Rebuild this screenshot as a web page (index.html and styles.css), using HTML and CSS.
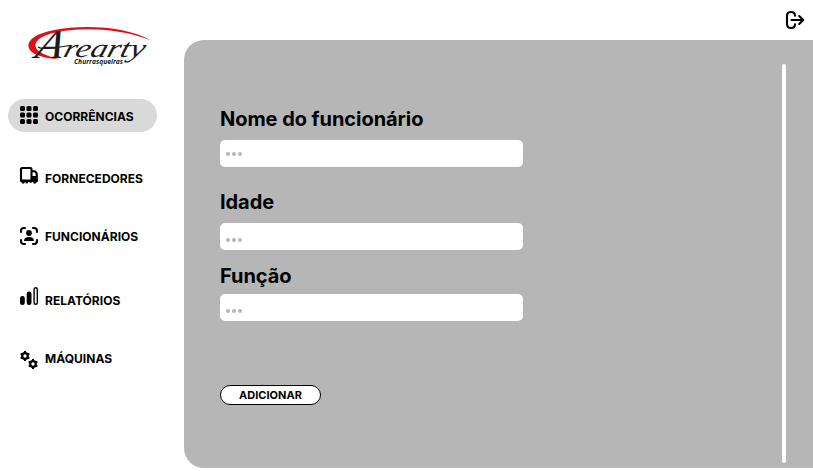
FILE: index.html
```html
<!DOCTYPE html>
<html lang="pt-BR">
<head>
<meta charset="utf-8">
<title>Arearty Churrasqueiras</title>
<link rel="stylesheet" href="styles.css">
</head>
<body>
<div class="app">
  <aside class="sidebar">
    <svg class="logo" viewBox="0 0 140 56" role="img" aria-label="Arearty Churrasqueiras">
      <path class="swoosh" d="M131 20.500C108 6.500 64 4 34 10C16 13.500 7 20 8.500 27C10 34 22 38 40 39.500C27 36 16 32 15.500 26C15 18 29 12.500 47 10.500C77 7 108 11 131 20.500Z"/>
      <path class="stroke" d="M18 27C22 30 34 28 50 25.500"/>
      <g transform="translate(0 37) skewX(-16)">
        <text class="brand-cap" x="14" y="1" textLength="27" lengthAdjust="spacingAndGlyphs">A</text>
        <text class="brand" x="42" y="-.5" textLength="81" lengthAdjust="spacingAndGlyphs">rearty</text>
      </g>
      <text class="tagline" x="54" y="44" textLength="49" lengthAdjust="spacingAndGlyphs">Churrasqueiras</text>
    </svg>
    <nav class="menu">
      <a class="item active">
        <svg class="icon" viewBox="0 0 18 18"><rect width="5" height="5" rx="1.500"/><rect x="6.500" width="5" height="5" rx="1.500"/><rect x="13" width="5" height="5" rx="1.500"/><rect y="6.500" width="5" height="5" rx="1.500"/><rect x="6.500" y="6.500" width="5" height="5" rx="1.500"/><rect x="13" y="6.500" width="5" height="5" rx="1.500"/><rect y="13" width="5" height="5" rx="1.500"/><rect x="6.500" y="13" width="5" height="5" rx="1.500"/><rect x="13" y="13" width="5" height="5" rx="1.500"/></svg>
        <span>OCORRÊNCIAS</span>
      </a>
      <a class="item suppliers">
        <svg class="icon" viewBox="0 0 18 18"><path class="line" d="M1 13.500V2Q1 1 2 1H10.500Q11.500 1 11.500 2V13.500M11.500 4.200H14.500Q16.800 5 16.800 8.500V13.500"/><path d="M0 12.500H18V14Q18 15 17 15H16.500A1.700 1.700 0 0 1 13.100 15H12A1.500 1.500 0 0 1 9.300 15H8.200A1.500 1.500 0 0 1 5.200 15H4.800A1.700 1.700 0 0 1 1.400 15Q0 15 0 13.500ZM11 9H17V14H11Z"/></svg>
        <span>FORNECEDORES</span>
      </a>
      <a class="item staff">
        <svg class="icon" viewBox="0 0 18 18"><path class="line" d="M1 5V4Q1 1 4 1H5M13 1H14Q17 1 17 4V5M17 13V14Q17 17 14 17H13M5 17H4Q1 17 1 14V13"/><circle cx="9" cy="6" r="2.900"/><path d="M4 14Q4 10 9 10T14 14Z"/></svg>
        <span>FUNCIONÁRIOS</span>
      </a>
      <a class="item reports">
        <svg class="icon" viewBox="0 0 18 18"><rect y="9" width="4.800" height="9" rx="2.300"/><rect x="6.700" y="4.500" width="4.800" height="13.500" rx="2.300"/><rect class="thin" x="14.100" y=".7" width="3.200" height="16.600" rx="1.500"/></svg>
        <span>RELATÓRIOS</span>
      </a>
      <a class="item machines">
        <svg class="icon" viewBox="0 0 18 18"><g id="gear"><circle class="ring" cx="5" cy="5" r="2.800"/><path class="teeth" d="M5 0V1.700M5 8.300V10M.7 2.500L2.200 3.400M7.800 6.600L9.300 7.500M.7 7.500L2.200 6.600M7.800 3.400L9.300 2.500"/></g><use href="#gear" x="8" y="8"/></svg>
        <span>MÁQUINAS</span>
      </a>
    </nav>
  </aside>
  <main class="main">
    <header class="topbar">
      <svg class="exit" viewBox="0 0 18 18"><path class="line" d="M9 4.800C9 2 7.500 1 5 1S1 2 1 5V13C1 16 2.500 17 5 17S9 16 9 13.200M5.500 9H17M13.200 5L17.200 9L13.200 13"/></svg>
    </header>
    <section class="panel">
      <form class="form">
        <label for="nome">Nome do funcionário</label>
        <div class="field raised" id="nome"><i></i><i></i><i></i></div>
        <label for="idade">Idade</label>
        <div class="field" id="idade"><i></i><i></i><i></i></div>
        <label for="funcao" class="close">Função</label>
        <div class="field" id="funcao"><i></i><i></i><i></i></div>
        <button type="button">ADICIONAR</button>
      </form>
      <div class="scrollbar"></div>
    </section>
  </main>
</div>
</body>
</html>
```
FILE: styles.css
```css
* { box-sizing: border-box; }
body { margin: 0; background: #fff; color: #000; font-family: Inter, "Liberation Sans", sans-serif; overflow: hidden; }
.app { display: flex; width: 813px; height: 471px; }
.sidebar { width: 184px; padding: 20px 0 0 8px; }
.logo { display: block; width: 140px; height: 56px; margin-left: 12px; }
.swoosh { fill: #e20d17; }
.stroke { fill: none; stroke: #1c1c1c; stroke-width: 1.2; }
.brand, .brand-cap { font-family: "Liberation Serif", serif; font-style: italic; fill: #1c1c1c; }
.brand { font-size: 26px; }
.brand-cap { font-size: 41px; }
.tagline { font: italic 700 7px "Open Sans", sans-serif; fill: #1c1c1c; }
.menu { display: flex; flex-direction: column; margin-top: 23px; }
.item { display: flex; align-items: center; gap: 7px; width: 149px; height: 33px; padding-left: 12px; border-radius: 17px; font-size: 12px; font-weight: 700; letter-spacing: .02px; line-height: 15px; white-space: nowrap; }
.item span { padding-top: 2px; }
.active { background: #d9d9d9; }
.icon { width: 18px; height: 18px; flex: none; margin-bottom: 1px; overflow: visible; }
.suppliers { margin-top: 29px; }
.suppliers .icon { margin-bottom: 3px; }
.staff { margin-top: 25px; }
.staff .icon { margin-bottom: 0; }
.reports { margin-top: 31px; }
.reports .icon { margin-bottom: 7px; }
.machines { margin-top: 25px; }
.machines .icon { margin-top: 5px; margin-bottom: 0; }
.line { fill: none; stroke: #000; stroke-width: 2.1; stroke-linecap: round; stroke-linejoin: round; }
.thin { fill: none; stroke: #000; stroke-width: 1.4; }
.ring { fill: none; stroke: #000; stroke-width: 2.2; }
.teeth { fill: none; stroke: #000; stroke-width: 2; }
.main { flex: 1; display: flex; flex-direction: column; }
.topbar { height: 40px; display: flex; justify-content: flex-end; padding: 11px 9px 0 0; }
.exit { width: 18px; height: 18px; overflow: visible; }
.panel { display: flex; justify-content: space-between; height: 428px; padding: 24px 27px 5px 36px; background: #b6b6b6; border-radius: 20px 0 0 20px; }
.form { display: flex; flex-direction: column; align-items: flex-start; width: 303px; padding-top: 42px; }
label { font-size: 20px; font-weight: 700; letter-spacing: -.05px; line-height: 26px; margin-bottom: 8px; }
.field { display: flex; align-items: center; gap: 2px; width: 303px; height: 27px; padding: 6px 0 0 6px; margin-bottom: 22px; background: #fff; border-radius: 5px; }
.field i { width: 4px; height: 4px; border-radius: 50%; background: #b6b6b6; }
.raised { padding-top: 0; }
.close { margin-top: -9px; margin-bottom: 5px; }
button { width: 101px; height: 20px; margin-top: 42px; padding: 0; border: 1px solid #000; border-radius: 10px; background: #fff; color: #000; font: 700 11px/18px Inter, sans-serif; }
.scrollbar { width: 4px; height: 399px; background: #fff; border-radius: 2px; }
```
